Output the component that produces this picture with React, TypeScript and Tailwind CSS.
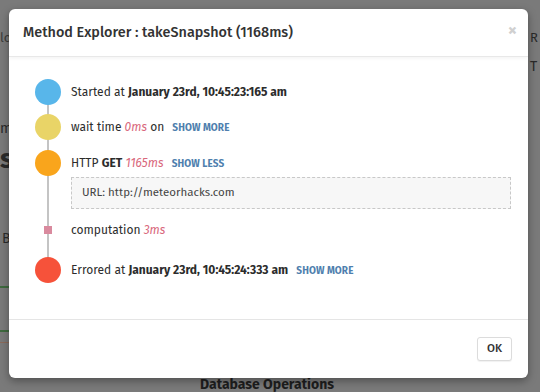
import React from 'react';

const font = { fontFamily: '"Fira Sans", "Noto Sans", "Open Sans", sans-serif' };

const Dot = ({ color }: { color: string }) => (
    <div className="w-[26px] h-[26px] rounded-full shrink-0" style={{ backgroundColor: color }} />
);

const ShowLink = ({ label }: { label: string }) => (
    <span className="ml-[5px] text-[10px] font-bold tracking-[0.1px] text-[#4f7fae]">{label}</span>
);

const Ms = ({ value }: { value: string }) => (
    <span className="italic text-[#d9687c]">{value}</span>
);

const App = () => {
    return (
        <div className="relative w-[540px] h-[392px] overflow-hidden bg-[#7a7a7a] text-[#2c2c2c]" style={font}>
            {/* page behind the backdrop */}
            <div className="absolute left-0 top-[28px] text-[13px] text-[#3a3a3a]">lo</div>
            <div className="absolute left-0 top-[118px] text-[14px] text-[#2a2a2a]">m</div>
            <div className="absolute left-0 top-[138px] text-[28px] font-bold text-[#2a2a2a]">s</div>
            <div className="absolute left-[2px] top-[228px] text-[14px] text-[#2a2a2a]">B</div>
            <div className="absolute left-0 top-[286px] w-[9px] h-[2px] bg-[#3f6a3f]" />
            <div className="absolute left-0 top-[330px] w-[9px] h-[2px] bg-[#3f6a3f]" />
            <div className="absolute left-0 top-[342px] w-[9px] h-[1px] bg-[#8a6a5a]" />
            <div className="absolute left-[530px] top-[28px] text-[13px] text-[#2a2a2a]">R</div>
            <div className="absolute left-[530px] top-[56px] text-[14px] text-[#2a2a2a]">T</div>
            <div className="absolute left-[200px] top-[374px] text-[14px] font-bold text-[#1e1e1e]">Database Operations</div>

            {/* modal */}
            <div className="absolute left-[9px] top-[9px] w-[519px] h-[369px] bg-white rounded-[6px] shadow-[0_3px_9px_rgba(0,0,0,0.35)] flex flex-col">
                <div className="h-[48px] flex items-center justify-between pl-[14px] pr-[11px] border-b border-[#e8e8e8] shadow-[0_2px_3px_rgba(0,0,0,0.04)]">
                    <h4 className="text-[14.4px] font-medium text-[#333]">Method Explorer : takeSnapshot (1168ms)</h4>
                    <span className="text-[18px] leading-none text-[#d0d0d0] font-bold -mt-[6px]">×</span>
                </div>

                <div className="flex-1 pl-[26px] pr-[17px] pt-[22px]">
                    <div className="relative">
                        <div className="absolute left-[12px] top-[13px] bottom-[13px] w-[2px] bg-[#c4c4c4]" />

                        <div className="relative flex items-center h-[26px] gap-[10px] text-[12px]">
                            <Dot color="#58b6ea" />
                            <span>Started at <b>January 23rd, 10:45:23:165 am</b></span>
                        </div>

                        <div className="relative flex items-center h-[26px] gap-[10px] mt-[9px] text-[12px]">
                            <Dot color="#e9d467" />
                            <span>wait time <Ms value="0ms" /> on <ShowLink label="SHOW MORE" /></span>
                        </div>

                        <div className="relative flex items-center h-[26px] gap-[10px] mt-[10px] text-[12px]">
                            <Dot color="#f9a51c" />
                            <span>HTTP <b>GET</b> <Ms value="1165ms" /> <ShowLink label="SHOW LESS" /></span>
                        </div>

                        <div className="ml-[36px] mt-[1px] h-[32px] flex items-center px-[10px] bg-[#f7f7f7] border border-dashed border-[#c8c8c8] text-[11.5px] text-[#444]">
                            URL: http://meteorhacks.com
                        </div>

                        <div className="relative flex items-center h-[26px] gap-[10px] mt-[8px] text-[12px]">
                            <div className="w-[26px] flex justify-center shrink-0">
                                <div className="w-[8px] h-[8px] bg-[#d98a9e]" />
                            </div>
                            <span>computation <Ms value="3ms" /></span>
                        </div>

                        <div className="relative flex items-center h-[26px] gap-[10px] mt-[14px] text-[12px]">
                            <Dot color="#f6523a" />
                            <span>Errored at <b>January 23rd, 10:45:24:333 am</b> <ShowLink label="SHOW MORE" /></span>
                        </div>
                    </div>
                </div>

                <div className="h-[59px] border-t border-[#e5e5e5] flex items-center justify-end pr-[16px]">
                    <button className="h-[24px] px-[9px] rounded-[3px] border border-[#dcdcdc] bg-white text-[11.5px] font-medium text-[#333] shadow-[0_1px_1px_rgba(0,0,0,0.06)]">
                        OK
                    </button>
                </div>
            </div>
        </div>
    );
};

export default App;
